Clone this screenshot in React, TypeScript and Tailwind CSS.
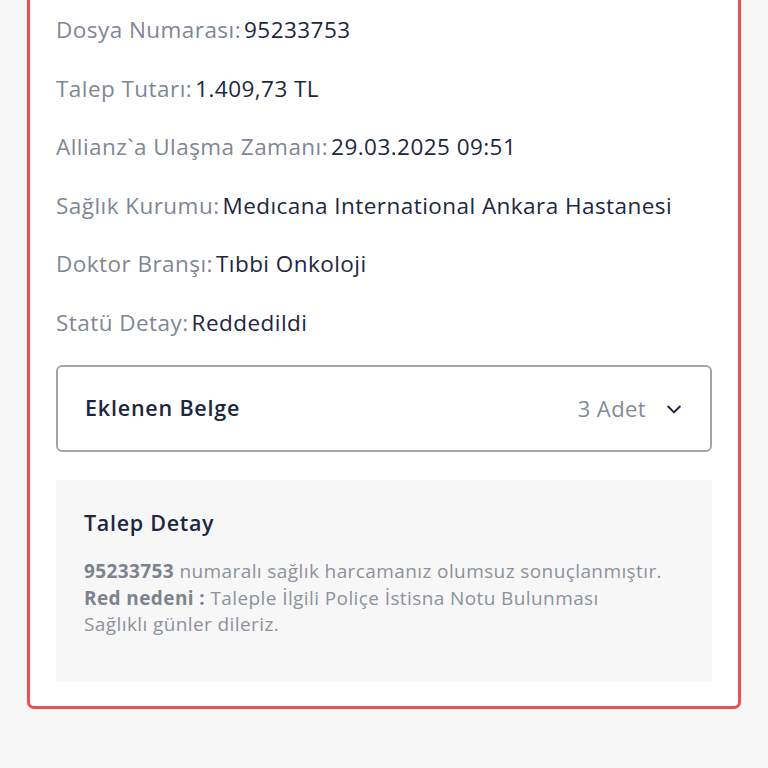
const rows = [
  { label: 'Dosya Numarası:', value: '95233753' },
  { label: 'Talep Tutarı:', value: '1.409,73 TL' },
  { label: 'Allianz`a Ulaşma Zamanı:', value: '29.03.2025 09:51' },
  { label: 'Sağlık Kurumu:', value: 'Medıcana International Ankara Hastanesi' },
  { label: 'Doktor Branşı:', value: 'Tıbbi Onkoloji' },
  { label: 'Statü Detay:', value: 'Reddedildi' },
];

function ChevronDown() {
  return (
    <svg width="20" height="20" viewBox="0 0 24 24" fill="none" stroke="#1f2a44" strokeWidth="2.4" strokeLinecap="round" strokeLinejoin="round">
      <path d="M5 9l7 7 7-7" />
    </svg>
  );
}

export default function App() {
  return (
    <div className="min-h-[768px] bg-[#f6f6f6] px-[27px] pb-10" style={{ fontFamily: '"Open Sans", "Noto Sans", sans-serif' }}>
      <div className="bg-white border-x-[3px] border-b-[3px] border-[#ee4d52] rounded-b-[7px] px-[26px] pt-[1px] pb-[24px]">
        <div className="flex flex-col">
          {rows.map((r) => (
            <div key={r.label} className="h-[58.5px] flex items-center text-[22.5px] tracking-[0.45px]">
              <span className="text-[#808794]">{r.label}</span>
              <span className="text-[#1d2740] ml-[3px]">{r.value}</span>
            </div>
          ))}
        </div>

        <div className="mt-[13px] h-[87px] border-2 border-[#a2a6ad] rounded-[6px] flex items-center justify-between pl-[27px] pr-[26px]">
          <span className="text-[21.5px] font-semibold text-[#1d2740] tracking-[0.8px]">Eklenen Belge</span>
          <div className="flex items-center gap-[18px]">
            <span className="text-[22px] text-[#858b96] tracking-[0.4px]">3 Adet</span>
            <ChevronDown />
          </div>
        </div>

        <div className="mt-[28px] h-[202px] bg-[#f7f7f8] px-[28px] pt-[28px]">
          <h3 className="text-[21.5px] font-semibold text-[#1d2740] leading-[30px] tracking-[0.7px]">Talep Detay</h3>
          <div className="mt-[20px] text-[19px] leading-[26.5px] text-[#8d929b] tracking-[0.4px]">
            <p><span className="font-bold text-[#7d838e]">95233753</span> numaralı sağlık harcamanız olumsuz sonuçlanmıştır.</p>
            <p><span className="font-bold text-[#7d838e]">Red nedeni :</span> Taleple İlgili Poliçe İstisna Notu Bulunması</p>
            <p>Sağlıklı günler dileriz.</p>
          </div>
        </div>
      </div>
    </div>
  );
}
